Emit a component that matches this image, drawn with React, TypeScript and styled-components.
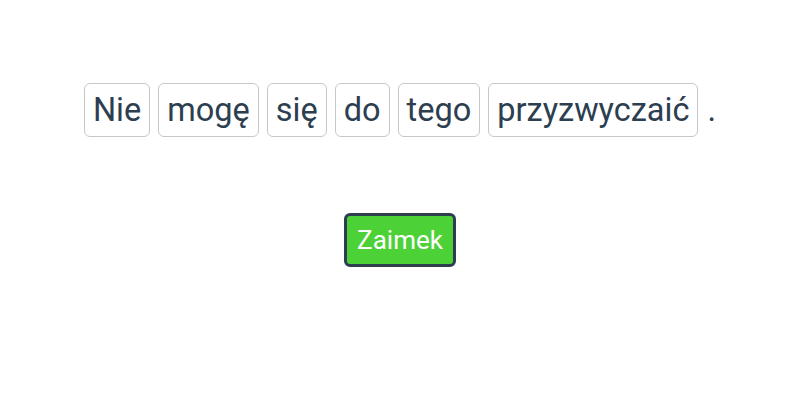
import React from "react";
import styled, { createGlobalStyle } from "styled-components";

const Global = createGlobalStyle`
  html, body { margin: 0; padding: 0; background: #ffffff; }
  body { font-family: Roboto, "Liberation Sans", sans-serif; }
`;

const Page = styled.main`
  display: flex;
  flex-direction: column;
  align-items: center;
  padding-top: 83px;
  gap: 76px;
`;

const Sentence = styled.div`
  display: flex;
  align-items: center;
  gap: 8px;
`;

const Word = styled.span`
  display: inline-block;
  font-size: 32.5px;
  line-height: 36px;
  color: #2c3e50;
  padding: 8px 8px;
  border: 1px solid #c4c8cc;
  border-radius: 6px;
  background: #fff;
`;

const Punct = styled.span`
  font-size: 32.5px;
  line-height: 36px;
  color: #2c3e50;
  margin-left: 1px;
`;

const TagButton = styled.button`
  font-family: Roboto, "Liberation Sans", sans-serif;
  font-size: 26px;
  line-height: 30px;
  color: #ffffff;
  background: #4cd137;
  border: 3px solid #2c3e50;
  border-radius: 6px;
  padding: 9px 10px;
  cursor: pointer;
`;

const words = ["Nie", "mogę", "się", "do", "tego", "przyzwyczaić"];

export default function App() {
  return (
    <>
      <Global />
      <Page>
        <Sentence>
          {words.map((w) => (
            <Word key={w}>{w}</Word>
          ))}
          <Punct>.</Punct>
        </Sentence>
        <TagButton>Zaimek</TagButton>
      </Page>
    </>
  );
}
